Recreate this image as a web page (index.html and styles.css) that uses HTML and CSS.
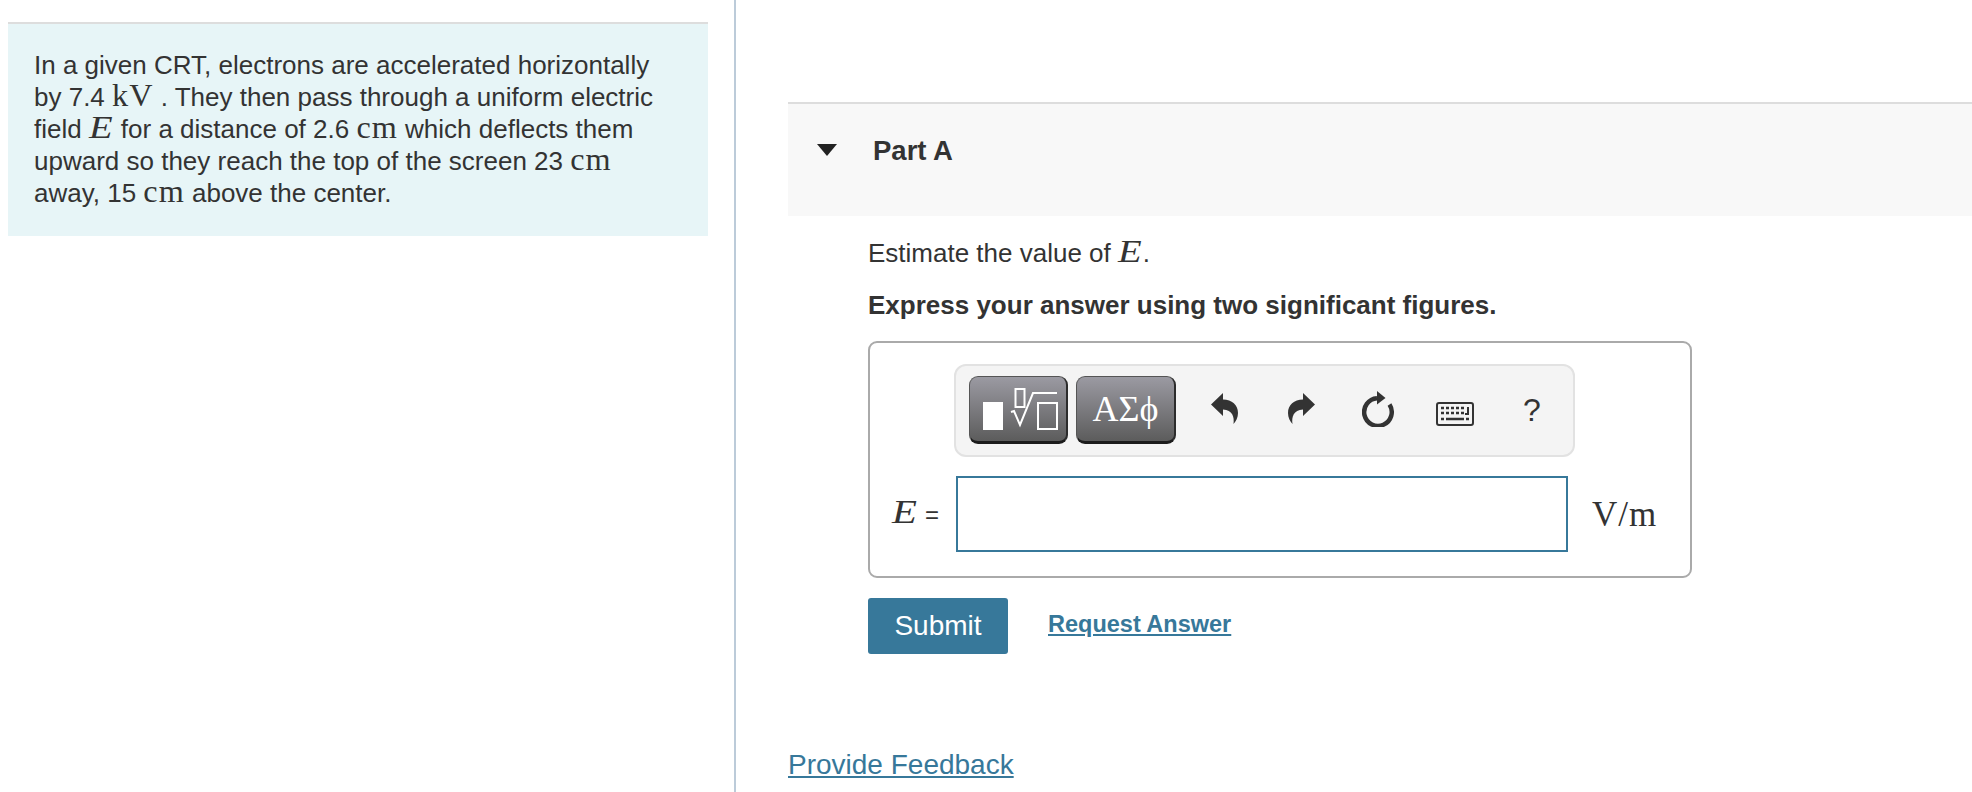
FILE: index.html
```html
<!DOCTYPE html>
<html lang="en">
<head>
    <meta charset="UTF-8">
    <title>Part A</title>
    <link rel="stylesheet" href="styles.css">
</head>
<body>
    <div class="left-col">
        <div class="intro">
            In a given CRT, electrons are accelerated horizontally
            by 7.4 <span class="math">kV</span> . They then pass through a uniform electric
            field <span class="math var">E</span> for a distance of 2.6 <span class="math">cm</span> which deflects them
            upward so they reach the top of the screen 23 <span class="math">cm</span>
            away, 15 <span class="math">cm</span> above the center.
        </div>
    </div>

    <div class="right-col">
        <div class="part-head">
            <svg class="caret" width="20" height="12" viewBox="0 0 20 12"><path d="M0 0H20L10 12Z" fill="#222"/></svg>
            <span>Part A</span>
        </div>

        <div class="part-body">
            <p class="question">Estimate the value of <span class="math var">E</span>.</p>
            <p class="instruction">Express your answer using two significant figures.</p>

            <div class="answer-box">
                <div class="toolbar">
                    <div class="tool-btn templates">
                        <svg width="76" height="44" viewBox="0 0 76 44">
                            <rect x="0" y="15" width="20" height="28" fill="#fff"/>
                            <g fill="none" stroke="#fff" stroke-width="2">
                                <rect x="32.5" y="2" width="9" height="18"/>
                                <path d="M28 25L31 24L37 38L50 6H74"/>
                                <rect x="55" y="16" width="19" height="26"/>
                            </g>
                        </svg>
                    </div>
                    <div class="tool-btn symbols">ΑΣϕ</div>

                    <svg class="undo" width="27" height="31" viewBox="0 0 27 31"><path d="M0 11.500L12 0V6.500C21 6.500 27 12 27 20C27 24.500 25 28.500 22.500 31C23.500 24 21.500 17 12 16.500V23Z" fill="#333"/></svg>
                    <svg class="redo" width="27" height="31" viewBox="0 0 27 31"><path d="M27 11.500L15 0V6.500C6 6.500 0 12 0 20C0 24.500 2 28.500 4.500 31C3.500 24 5.500 17 15 16.500V23Z" fill="#333"/></svg>
                    <svg class="reset" width="33" height="36" viewBox="0 0 33 36">
                        <path d="M27.500 13.500A13.800 13.800 0 1 1 15 7.300" fill="none" stroke="#333" stroke-width="4.500"/>
                        <path d="M15 0L23.500 7L15 13.500Z" fill="#333"/>
                    </svg>
                    <svg class="keyboard" width="38" height="24" viewBox="0 0 38 24">
                        <rect x="1" y="1" width="36" height="22" rx="2" fill="none" stroke="#333" stroke-width="2"/>
                        <path d="M5 6h3M10 6h3M15 6h3M20 6h3M25 6h3M5 11h3M10 11h3M15 11h3M20 11h3M25 11h3M5 17h3M10 17h18M30 17h3" stroke="#333" stroke-width="2.400" fill="none"/>
                        <path d="M32 5v7h-3" stroke="#333" stroke-width="2" fill="none"/>
                    </svg>
                    <span class="help">?</span>
                </div>

                <div class="answer-row">
                    <span class="answer-label"><span class="math var">E</span> <span class="equals">=</span></span>
                    <input class="answer-input" type="text">
                    <span class="math units">V/m</span>
                </div>
            </div>

            <div class="actions">
                <button class="submit">Submit</button>
                <a class="request" href="#">Request Answer</a>
            </div>
        </div>

        <a class="feedback" href="#">Provide Feedback</a>
    </div>
</body>
</html>
```

FILE: styles.css
```css
* {
    box-sizing: border-box;
}
body {
    font-family: "Liberation Sans", Arial, sans-serif;
    font-size: 26px;
    color: #333;
    margin: 0;
    height: 792px;
    overflow: hidden;
    display: flex;
    background: #fff;
}
.math {
    font-family: "Liberation Serif", "Times New Roman", serif;
    font-size: 1.24em;
    line-height: 0;
    letter-spacing: 1px;
}
.var {
    display: inline-block;
    font-style: italic;
    letter-spacing: 0;
    margin-right: 5px;
    transform: scaleX(1.2);
    transform-origin: left;
}
.left-col {
    width: 736px;
    height: 100%;
    padding: 22px 0 0 8px;
    border-right: 2px solid #bccbd9;
    flex-shrink: 0;
}
.intro {
    width: 700px;
    height: 214px;
    padding: 25px 44px 0 26px;
    line-height: 32px;
    background: #e7f5f7;
    border-top: 2px solid #ddd;
}
.right-col {
    flex-grow: 1;
    padding: 102px 0 0 52px;
}
.part-head {
    height: 114px;
    background: #f8f8f8;
    border-top: 2px solid #ddd;
    display: flex;
    align-items: flex-start;
    padding: 31px 0 0 29px;
    font-size: 27.5px;
    font-weight: bold;
    line-height: 32px;
}
.caret {
    margin: 9px 36px 0 0;
}
.part-body {
    padding: 21px 0 0 80px;
}
.question {
    margin: 0;
    line-height: 32px;
}
.instruction {
    margin: 20px 0 0;
    line-height: 32px;
    font-weight: bold;
}
.answer-box {
    width: 824px;
    height: 237px;
    margin-top: 20px;
    padding: 21px 0 0;
    border: 2px solid #aaa;
    border-radius: 9px;
}
.toolbar {
    width: 621px;
    height: 93px;
    margin-left: 84px;
    padding: 10px 0 0 13px;
    background: #f4f4f4;
    border: 2px solid #e2e2e2;
    border-radius: 12px;
    display: flex;
    align-items: flex-start;
}
.tool-btn {
    height: 68px;
    border-radius: 9px;
    border: 1px solid #555;
    border-bottom: 3px solid #1c1c1c;
    border-right: 2px solid #2c2c2c;
    background: linear-gradient(#9b9aa2, #5c5c5c);
    color: #fff;
    display: flex;
    align-items: center;
    justify-content: center;
}
.templates {
    width: 99px;
    padding-left: 5px;
}
.symbols {
    width: 100px;
    margin-left: 8px;
    font-family: "Liberation Serif", serif;
    font-size: 36px;
}
.undo {
    margin: 17px 0 0 35px;
}
.redo {
    margin: 17px 0 0 50px;
}
.reset {
    margin: 15px 0 0 47px;
}
.keyboard {
    margin: 26px 0 0 41px;
}
.help {
    margin: 16px 0 0 49px;
    font-size: 32px;
    line-height: 36px;
}
.answer-row {
    display: flex;
    align-items: center;
    margin-top: 19px;
}
.answer-label {
    width: 86px;
    padding-left: 22px;
    white-space: nowrap;
}
.answer-label .math {
    font-size: 34px;
}
.equals {
    font-size: 24px;
}
.answer-input {
    width: 612px;
    height: 76px;
    border: 2px solid #37789a;
    background: #fff;
    outline: none;
}
.units {
    margin-left: 24px;
    font-size: 35px;
    line-height: 1;
}
.actions {
    display: flex;
    align-items: center;
    margin-top: 20px;
}
.submit {
    width: 140px;
    height: 56px;
    background: #37789a;
    border: none;
    border-radius: 3px;
    color: #fff;
    font-family: inherit;
    font-size: 28px;
}
.request {
    margin: -4px 0 0 40px;
    font-weight: bold;
    font-size: 23.5px;
    color: #37789a;
}
.feedback {
    display: inline-block;
    margin-top: 95px;
    font-size: 28px;
    color: #37789a;
}
```
